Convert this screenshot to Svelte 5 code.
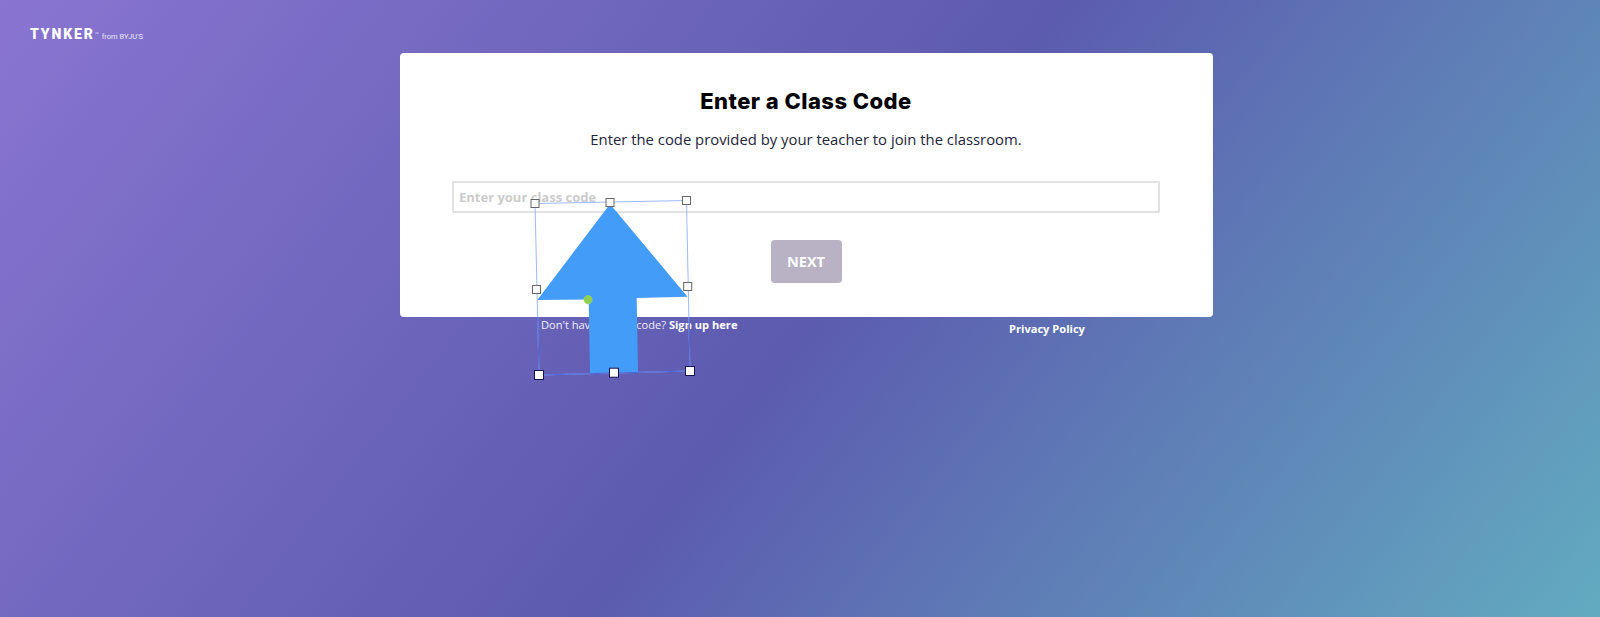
<script>
  const handles = [
    [535, 203.5], [610, 202.5], [686.5, 200.5],
    [536.5, 289.5], [687.7, 286.5],
    [539, 375], [614, 372.7], [690, 371]
  ];
</script>

<div class="page">
  <header class="brand">
    <span class="wordmark">TYNKER</span>
    <span class="tm">™</span>
    <span class="from">from BYJU'S</span>
  </header>

  <main class="card">
    <h1>Enter a Class Code</h1>
    <p>Enter the code provided by your teacher to join the classroom.</p>
    <input type="text" placeholder="Enter your class code" />
    <button type="button">NEXT</button>
  </main>

  <footer class="links">
    <span class="signup">Don't have a class code? <b>Sign up here</b></span>
    <b class="privacy">Privacy Policy</b>
  </footer>

  <svg class="overlay" width="1600" height="617" viewBox="0 0 1600 617" aria-hidden="true">
    <polygon class="outline-top" points="535,203.5 686.5,200.5 690,371 539,375" />
    <polygon class="arrow" points="610,204 687.5,296.7 636.7,298 638,372 590,373 588.7,299.5 537.3,300" />
    <polyline class="outline-low" points="537.7,317 539,375 690,371 689.2,317" />
    {#each handles as [x, y], i}
      {#if i > 4}
        <rect class="handle white" x={x - 4.5} y={y - 4.5} width="9" height="9" />
      {:else}
        <rect class="handle" x={x - 4} y={y - 4} width="8" height="8" />
      {/if}
    {/each}
    <circle class="pivot" cx="588" cy="299.7" r="4.2" />
  </svg>
</div>

<style>
  :global(body) {
    margin: 0;
  }
  .page {
    position: relative;
    width: 1600px;
    height: 617px;
    overflow: hidden;
    background: linear-gradient(128deg, #8975d1 0%, #5c5baf 51%, #62abc0 100%);
    font-family: "Open Sans", "Liberation Sans", sans-serif;
  }
  .brand {
    display: flex;
    align-items: baseline;
    height: 53px;
    box-sizing: border-box;
    padding: 26px 0 0 30px;
    color: #fff;
    line-height: 16px;
  }
  .wordmark {
    font-family: Roboto, "Liberation Sans", sans-serif;
    font-size: 14px;
    font-weight: 900;
    letter-spacing: 1.9px;
  }
  .tm {
    font-size: 5px;
    margin: 0 3px 0 0;
    opacity: 0.7;
    align-self: flex-start;
  }
  .from {
    font-family: Roboto, "Liberation Sans", sans-serif;
    font-size: 7.5px;
    color: #e6e2f4;
  }
  .card {
    display: flex;
    flex-direction: column;
    align-items: center;
    box-sizing: border-box;
    width: 813px;
    height: 264px;
    margin-left: 400px;
    padding: 34px 53px 0 52px;
    background: #fff;
    border-radius: 4px;
  }
  h1 {
    margin: 0;
    font-family: Inter, "Liberation Sans", sans-serif;
    font-size: 22px;
    line-height: 28px;
    font-weight: 800;
    letter-spacing: 0.45px;
    color: #000;
  }
  p {
    margin: 13px 0 0;
    font-size: 14.85px;
    line-height: 22px;
    color: #24243a;
  }
  input {
    display: block;
    box-sizing: border-box;
    width: 100%;
    height: 32px;
    margin-top: 31px;
    padding: 0 5px;
    border: 2px solid #e2e2e2;
    background: #fff;
    font-family: inherit;
    font-size: 13px;
    font-weight: 700;
    outline: none;
  }
  input::placeholder {
    color: #cccccc;
    opacity: 1;
  }
  button {
    width: 71px;
    height: 43px;
    margin-top: 27px;
    padding: 0;
    border: 0;
    border-radius: 4px;
    background: #b9b1c4;
    color: #fff;
    font-family: inherit;
    font-size: 14.5px;
    font-weight: 700;
  }
  .links {
    display: flex;
    align-items: flex-start;
    font-size: 11.1px;
    line-height: 16px;
    color: #f1eefa;
  }
  .links b {
    color: #fff;
    font-weight: 700;
  }
  .signup {
    margin: 0 0 0 541px;
  }
  .privacy {
    margin: 4px 0 0 0;
    position: absolute;
    left: 1009px;
  }
  .overlay {
    position: absolute;
    inset: 0;
  }
  .outline-top {
    fill: none;
    stroke: #9db9fb;
    stroke-width: 1;
  }
  .outline-low {
    fill: none;
    stroke: #4f67d8;
    stroke-width: 1;
  }
  .arrow {
    fill: #439df8;
  }
  .handle {
    fill: #fbfbfb;
    stroke: #666;
    stroke-width: 1;
  }
  .handle.white {
    fill: #fff;
    stroke: #14144f;
  }
  .pivot {
    fill: #8fd14f;
    stroke: #a5d86f;
    stroke-width: 0.5;
  }
</style>
